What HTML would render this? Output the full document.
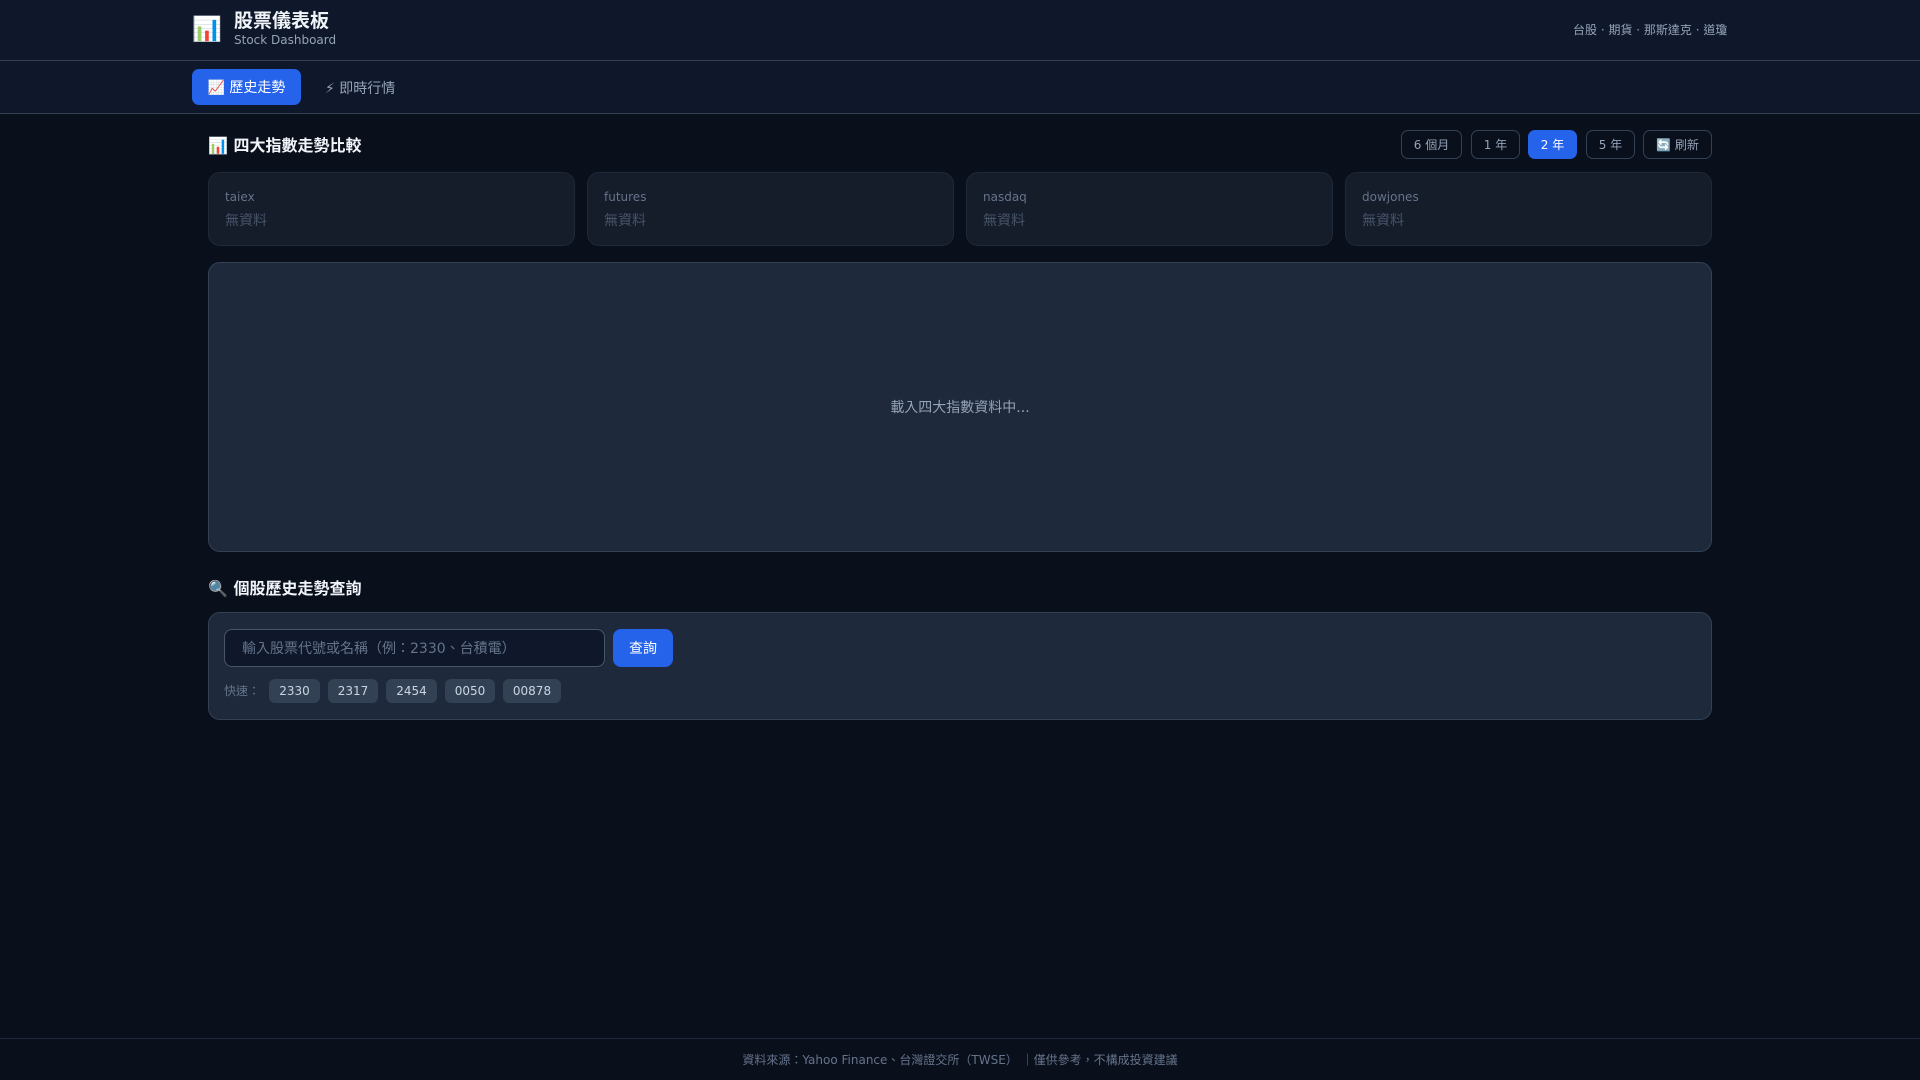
<!DOCTYPE html>
<html><head><meta charset="utf-8"><style>
*{box-sizing:border-box;margin:0;padding:0}
body{width:1920px;height:1080px;background:#0a0f1c;font-family:"DejaVu Sans","Noto Sans CJK TC",sans-serif;color:#e2e8f0;position:relative;overflow:hidden}
.hdr{position:absolute;left:0;top:0;width:1920px;height:61px;background:#0f172a;border-bottom:1px solid #334155}
.nav{position:absolute;left:0;top:61px;width:1920px;height:53px;background:#0f172a;border-bottom:1px solid #334155}
.abs{position:absolute}
.btn{position:absolute;top:130px;height:29px;border:1px solid #334155;border-radius:7px;font-size:12px;color:#94a3b8;display:flex;align-items:center;justify-content:center}
.card{position:absolute;top:172px;width:367px;height:74px;background:#151c2a;border:1px solid #1f2937;border-radius:12px;padding:17px 16px}
.card .l{font-size:12px;color:#64748b}
.card .v{font-size:14px;color:#475569;margin-top:6px}
.chip{position:absolute;top:679px;height:24px;background:#334155;border-radius:6px;font-size:12px;color:#cbd5e1;display:flex;align-items:center;justify-content:center}
</style></head><body>
<div class="hdr"></div><div class="nav"></div>
<div class="abs" style="left:192px;top:15px;font-size:24px">📊</div>
<div class="abs" style="left:234px;top:6px;font-size:19px;font-weight:bold;color:#f1f5f9">股票儀表板</div>
<div class="abs" style="left:234px;top:33px;font-size:12px;color:#94a3b8">Stock Dashboard</div>
<div class="abs" style="left:1573px;top:21px;font-size:12px;color:#94a3b8">台股 · 期貨 · 那斯達克 · 道瓊</div>
<div class="abs" style="left:192px;top:69px;width:109px;height:36px;background:#2563eb;border-radius:7px;color:#fff;font-size:14px;display:flex;align-items:center;justify-content:center">📈 歷史走勢</div>
<div class="abs" style="left:325px;top:78px;font-size:14px;color:#94a3b8">⚡ 即時行情</div>
<div class="abs" style="left:208px;top:132px;font-size:16px;font-weight:bold;color:#f1f5f9">📊 四大指數走勢比較</div>
<div class="btn" style="left:1401px;width:61px">6 個月</div>
<div class="btn" style="left:1471px;width:49px">1 年</div>
<div class="btn" style="left:1528px;width:49px;background:#2563eb;border-color:#2563eb;color:#fff">2 年</div>
<div class="btn" style="left:1586px;width:49px">5 年</div>
<div class="btn" style="left:1643px;width:69px">🔄 刷新</div>
<div class="card" style="left:208px"><div class="l">taiex</div><div class="v">無資料</div></div>
<div class="card" style="left:587px"><div class="l">futures</div><div class="v">無資料</div></div>
<div class="card" style="left:966px"><div class="l">nasdaq</div><div class="v">無資料</div></div>
<div class="card" style="left:1345px"><div class="l">dowjones</div><div class="v">無資料</div></div>
<div class="abs" style="left:208px;top:262px;width:1504px;height:290px;background:#1e293b;border:1px solid #334155;border-radius:12px;display:flex;align-items:center;justify-content:center;font-size:14px;color:#94a3b8">載入四大指數資料中...</div>
<div class="abs" style="left:208px;top:575px;font-size:16px;font-weight:bold;color:#f1f5f9">🔍 個股歷史走勢查詢</div>
<div class="abs" style="left:208px;top:612px;width:1504px;height:108px;background:#1e293b;border:1px solid #334155;border-radius:12px"></div>
<div class="abs" style="left:224px;top:629px;width:381px;height:38px;background:#0f172a;border:1px solid #475569;border-radius:8px;padding-left:17px;font-size:14px;color:#64748b;display:flex;align-items:center">輸入股票代號或名稱（例：2330、台積電）</div>
<div class="abs" style="left:613px;top:629px;width:60px;height:38px;background:#2563eb;border-radius:8px;color:#fff;font-size:14px;display:flex;align-items:center;justify-content:center">查詢</div>
<div class="abs" style="left:224px;top:682px;font-size:12px;color:#64748b">快速：</div>
<div class="chip" style="left:269px;width:51px">2330</div>
<div class="chip" style="left:328px;width:50px">2317</div>
<div class="chip" style="left:386px;width:51px">2454</div>
<div class="chip" style="left:445px;width:50px">0050</div>
<div class="chip" style="left:503px;width:58px">00878</div>
<div class="abs" style="left:0;top:1038px;width:1920px;border-top:1px solid #1e293b"></div>
<div class="abs" style="left:0;top:1051px;width:1920px;text-align:center;font-size:12px;color:#64748b">資料來源：Yahoo Finance、台灣證交所（TWSE） ｜僅供參考，不構成投資建議</div>
</body></html>
